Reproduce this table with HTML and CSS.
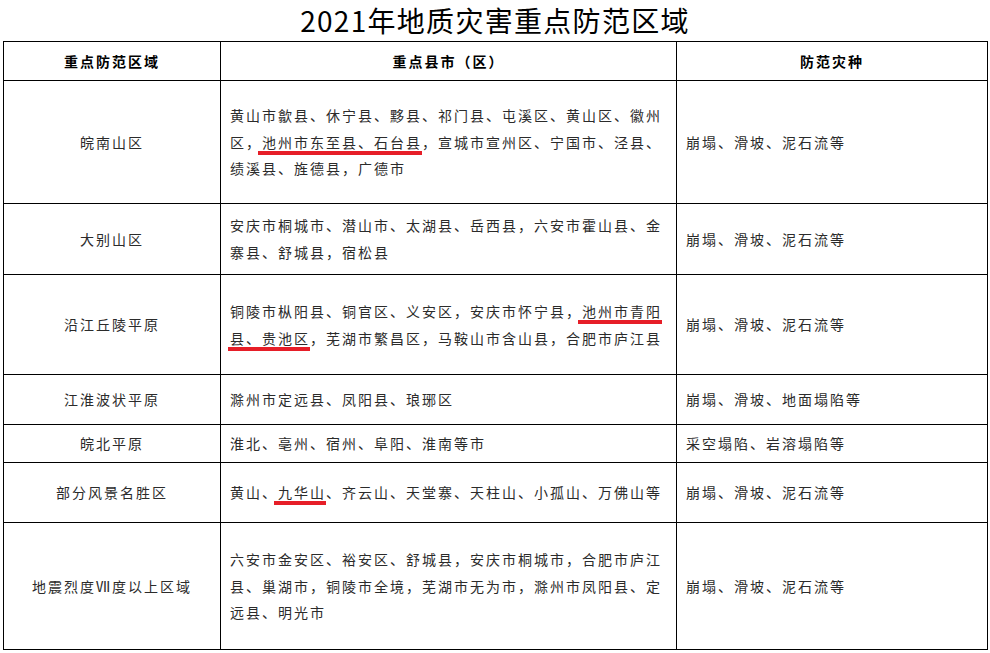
FILE: index.html
```html
<!DOCTYPE html>
<html lang="zh-CN">
<head>
<meta charset="utf-8">
<title>2021年地质灾害重点防范区域</title>
<link rel="stylesheet" href="styles.css">
</head>
<body>
<h1 class="title">2021年地质灾害重点防范区域</h1>
<div class="grid">
  <div class="cell head">重点防范区域</div>
  <div class="cell head">重点县市（区）</div>
  <div class="cell head">防范灾种</div>

  <div class="cell area">皖南山区</div>
  <div class="cell list"><div class="txt">黄山市歙县、休宁县、黟县、祁门县、屯溪区、黄山区、徽州<br>区，<span class="mark">池州市东至县、石台县</span>，宣城市宣州区、宁国市、泾县、<br>绩溪县、旌德县，广德市</div></div>
  <div class="cell kind">崩塌、滑坡、泥石流等</div>

  <div class="cell area">大别山区</div>
  <div class="cell list"><div class="txt">安庆市桐城市、潜山市、太湖县、岳西县，六安市霍山县、金<br>寨县、舒城县，宿松县</div></div>
  <div class="cell kind">崩塌、滑坡、泥石流等</div>

  <div class="cell area">沿江丘陵平原</div>
  <div class="cell list"><div class="txt">铜陵市枞阳县、铜官区、义安区，安庆市怀宁县，<span class="mark">池州市青阳</span><br><span class="mark mark-s">县、贵池区</span>，芜湖市繁昌区，马鞍山市含山县，合肥市庐江县</div></div>
  <div class="cell kind">崩塌、滑坡、泥石流等</div>

  <div class="cell area">江淮波状平原</div>
  <div class="cell list"><div class="txt">滁州市定远县、凤阳县、琅琊区</div></div>
  <div class="cell kind">崩塌、滑坡、地面塌陷等</div>

  <div class="cell area">皖北平原</div>
  <div class="cell list"><div class="txt">淮北、亳州、宿州、阜阳、淮南等市</div></div>
  <div class="cell kind">采空塌陷、岩溶塌陷等</div>

  <div class="cell area">部分风景名胜区</div>
  <div class="cell list"><div class="txt">黄山、<span class="mark">九华山</span>、齐云山、天堂寨、天柱山、小孤山、万佛山等</div></div>
  <div class="cell kind">崩塌、滑坡、泥石流等</div>

  <div class="cell area">地震烈度Ⅶ度以上区域</div>
  <div class="cell list"><div class="txt">六安市金安区、裕安区、舒城县，安庆市桐城市，合肥市庐江<br>县、巢湖市，铜陵市全境，芜湖市无为市，滁州市凤阳县、定<br>远县、明光市</div></div>
  <div class="cell kind">崩塌、滑坡、泥石流等</div>
</div>
</body>
</html>
```
FILE: styles.css
```css
html, body {
  margin: 0;
  padding: 0;
  background: #fff;
}

body {
  font-family: "Noto Sans CJK SC", "Noto Sans", sans-serif;
  color: #2b2b2b;
}

.title {
  margin: 0;
  height: 41px;
  line-height: 40.5px;
  font-size: 28px;
  letter-spacing: 1.3px;
  font-weight: normal;
  color: #000;
  text-align: center;
}

.grid {
  margin-left: 3px;
  width: 985px;
  box-sizing: border-box;
  display: grid;
  grid-template-columns: 217px 456px 311px;
  grid-template-rows: 39px 123px 71px 100px 50px 38px 60px 127px;
  border-left: 1px solid #000;
  border-top: 1px solid #000;
}

.cell {
  box-sizing: border-box;
  border-right: 1px solid #000;
  border-bottom: 1px solid #000;
  display: flex;
  align-items: center;
  font-size: 14px;
  letter-spacing: 2px;
  white-space: nowrap;
  line-height: 26.7px;
}

.head {
  justify-content: center;
  font-weight: bold;
  color: #000;
}

.area {
  justify-content: center;
}

.list,
.kind {
  padding-left: 9px;
}

.mark {
  padding-left: 4px;
  margin-left: -4px;
  padding-bottom: 3px;
  background-image: linear-gradient(#e61e28, #e61e28);
  background-repeat: no-repeat;
  background-size: 100% 4px;
  background-position: left bottom;
}

.mark-s {
  padding-left: 2px;
  margin-left: -2px;
}
```
